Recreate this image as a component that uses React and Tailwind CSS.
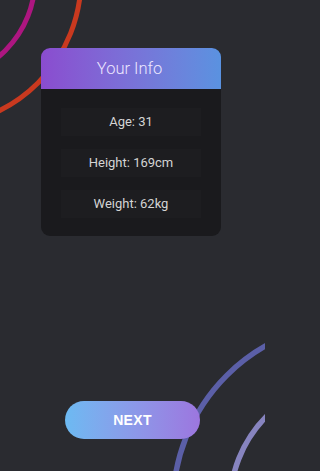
const rows = ['Age: 31', 'Height: 169cm', 'Weight: 62kg']

const Arcs = () => (
  <svg className="pointer-events-none absolute inset-0" width="265" height="471" viewBox="0 0 265 471">
    <circle cx="-66" cy="-21" r="147" fill="none" stroke="#c9391f" strokeWidth="5" />
    <circle cx="-66" cy="-21" r="101" fill="none" stroke="#ad1680" strokeWidth="5" />
    <circle cx="356" cy="505" r="183" fill="none" stroke="#5b5fa7" strokeWidth="5.5" />
    <circle cx="356" cy="505" r="126" fill="none" stroke="#8784bf" strokeWidth="5.5" />
  </svg>
)

export default function App() {
  return (
    <div className="min-h-screen w-full bg-[#2a2b30]">
      <div className="relative h-[471px] w-[265px] overflow-hidden font-['Roboto',sans-serif]">
        <Arcs />
        <div className="relative flex flex-col pt-[48px]">
          <div className="ml-[41px] w-[180px] overflow-hidden rounded-[9px] bg-[#1a1a1d]">
            <div className="flex h-[41px] items-center justify-center bg-gradient-to-r from-[#8a4ccf] to-[#5a92e0] pr-[3px] pt-[1px] text-[16.5px] font-light text-[#ece6ff]">
              Your Info
            </div>
            <div className="flex flex-col items-center gap-[13px] pt-[19px] pb-[18px]">
              {rows.map(r => (
                <div key={r} className="flex h-[28px] w-[140px] items-center justify-center bg-[#1d1d20] text-[13px] text-[#d4d4d4]">
                  {r}
                </div>
              ))}
            </div>
          </div>
          <button className="mt-[165px] ml-[65px] flex h-[38px] w-[135px] items-center justify-center rounded-full bg-gradient-to-r from-[#6cbaf2] to-[#9c76df] font-['Liberation_Sans',sans-serif] text-[14px] font-bold tracking-wide text-white">
            NEXT
          </button>
        </div>
      </div>
    </div>
  )
}
